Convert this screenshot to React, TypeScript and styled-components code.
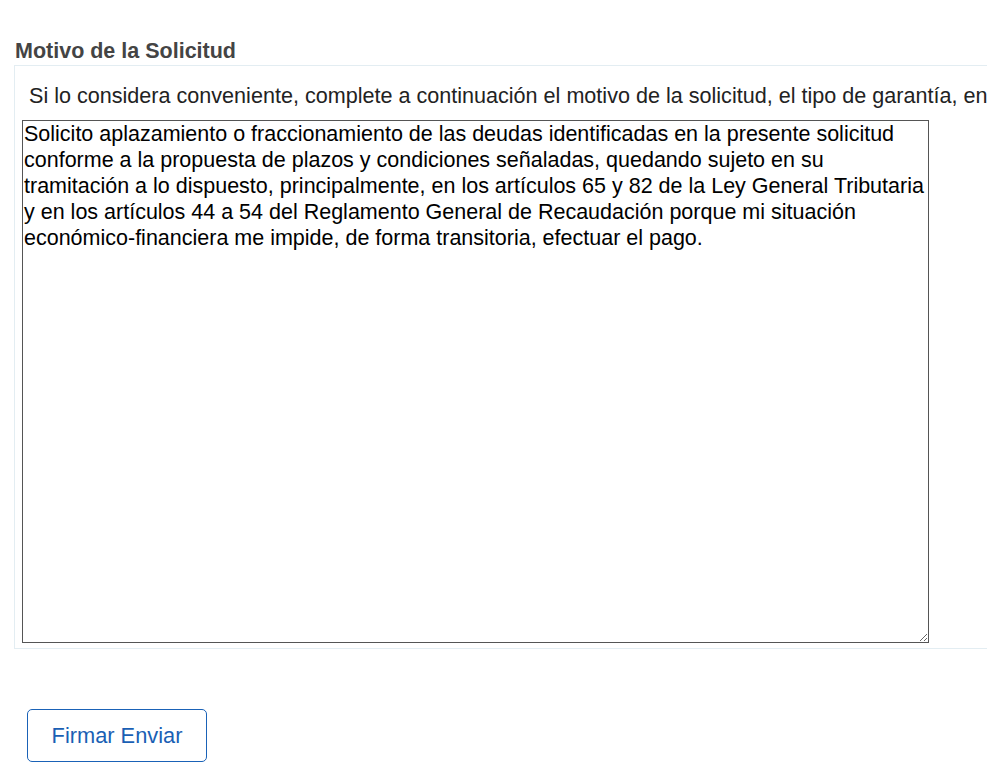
import React from "react";
import styled, { createGlobalStyle } from "styled-components";

const GlobalStyle = createGlobalStyle`
  html, body {
    margin: 0;
    padding: 0;
    background: #ffffff;
    overflow: hidden;
  }
  body {
    font-family: "Liberation Sans", Arial, sans-serif;
    color: #222;
  }
`;

const Page = styled.div`
  width: 987px;
  height: 768px;
  overflow: hidden;
  padding: 39px 0 0 14px;
  box-sizing: border-box;
`;

const Title = styled.h3`
  margin: 0 0 2px 1px;
  font-size: 21.5px;
  font-weight: bold;
  color: #444;
  line-height: 24px;
`;

const Panel = styled.section`
  width: 1100px;
  border: 1px solid #e3edf2;
  padding: 17px 0 5px 7px;
  box-sizing: border-box;
`;

const Intro = styled.p`
  margin: 0 0 11px 7px;
  font-size: 21.58px;
  line-height: 26px;
  color: #222;
  white-space: nowrap;
`;

const Reason = styled.textarea`
  display: block;
  width: 907px;
  height: 523px;
  box-sizing: border-box;
  border: 1px solid #555;
  padding: 0 1px 1px;
  font-family: "Liberation Sans", Arial, sans-serif;
  font-size: 21.5px;
  line-height: 26.1px;
  color: #000;
  resize: both;
  outline: none;
`;

const Actions = styled.div`
  padding: 60px 0 0 13px;
`;

const Button = styled.button`
  width: 180px;
  height: 53px;
  background: #fff;
  border: 1px solid #1a62b7;
  border-radius: 5px;
  color: #1a5fb4;
  font-family: "Liberation Sans", Arial, sans-serif;
  font-size: 21.8px;
  cursor: pointer;
`;

const text =
  "Solicito aplazamiento o fraccionamiento de las deudas identificadas en la presente solicitud conforme a la propuesta de plazos y condiciones señaladas, quedando sujeto en su tramitación a lo dispuesto, principalmente, en los artículos 65 y 82 de la Ley General Tributaria y en los artículos 44 a 54 del Reglamento General de Recaudación porque mi situación económico-financiera me impide, de forma transitoria, efectuar el pago.";

export default function App() {
  return (
    <Page>
      <GlobalStyle />
      <Title>Motivo de la Solicitud</Title>
      <Panel>
        <Intro>
          Si lo considera conveniente, complete a continuación el motivo de la
          solicitud, el tipo de garantía, en su caso, y cualquier otra
          información que estime oportuna.
        </Intro>
        <Reason defaultValue={text} />
      </Panel>
      <Actions>
        <Button>Firmar Enviar</Button>
      </Actions>
    </Page>
  );
}
